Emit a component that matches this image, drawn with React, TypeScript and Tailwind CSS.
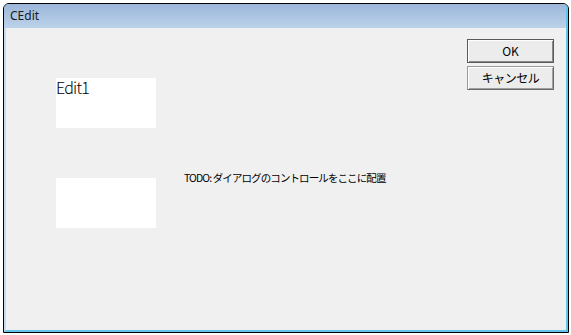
export default function App() {
    return (
        <div className="w-[571px] h-[335px] bg-white pt-[3px] pl-[3px] overflow-hidden">

            {/* Dialog window */}
            <div className="w-[566px] h-[330px] border border-black rounded-t-[6px] overflow-hidden flex flex-col bg-[#bcd3ea]">

                {/* Title bar */}
                <div className="h-[24px] shrink-0 bg-gradient-to-b from-[#9bb7da] to-[#bcd2ea] flex items-center pl-[6px] border-r-2 border-[#62c3ec]">
                    <span className="text-[12px] text-[#1a1a1a] font-['Noto_Sans',sans-serif]">CEdit</span>
                </div>

                {/* Client area */}
                <div className="flex-1 flex border-l-2 border-r-2 border-b-2 border-l-[#c9dcef] border-r-[#62c3ec] border-b-[#62c3ec] bg-[#f0f0f0] font-['Noto_Sans_CJK_JP','Noto_Sans',sans-serif] text-black">

                    {/* Edit boxes */}
                    <div className="flex flex-col gap-[50px] pl-[50px] pt-[50px]">
                        <div className="w-[100px] h-[50px] bg-white">
                            <span className="block text-[16px] leading-[18px] tracking-[-0.8px] font-light">Edit1</span>
                        </div>
                        <div className="w-[100px] h-[50px] bg-white" />
                    </div>

                    {/* Label */}
                    <div className="ml-[28px] mt-[143px] text-[10.5px] leading-[14px] tracking-[-0.9px] whitespace-nowrap">
                        TODO: ダイアログのコントロールをここに配置
                    </div>

                    {/* Buttons */}
                    <div className="ml-auto mr-[12px] mt-[11px] flex flex-col gap-[3px]">
                        <button className="w-[87px] h-[24px] bg-[#ececec] border border-[#5a5a5a] shadow-[inset_1px_1px_0_#ffffff,inset_-1px_-1px_0_#8a8a8a] text-[12px] leading-none">
                            OK
                        </button>
                        <button className="w-[87px] h-[24px] bg-[#ececec] border border-[#9a9a9a] border-r-[#6a6a6a] border-b-[#6a6a6a] shadow-[inset_1px_1px_0_#ffffff,inset_-1px_-1px_0_#a0a0a0] text-[12px] leading-none tracking-[-0.5px]">
                            キャンセル
                        </button>
                    </div>
                </div>
            </div>
        </div>
    )
}
